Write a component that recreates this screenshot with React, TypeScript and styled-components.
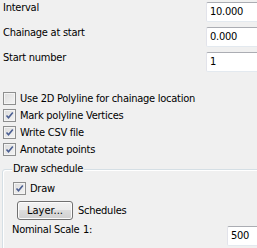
import React from "react"
import styled, { createGlobalStyle } from "styled-components"

const GlobalStyle = createGlobalStyle`
  html, body {
    margin: 0;
    padding: 0;
    background: #f0f0f0;
  }
`

const Panel = styled.div`
  width: 257px;
  height: 248px;
  overflow: hidden;
  background: #f0f0f0;
  font-family: "DejaVu Sans Condensed", "DejaVu Sans", sans-serif;
  font-size: 11px;
  letter-spacing: -0.25px;
  color: #000;
`

const FieldRow = styled.div`
  display: grid;
  grid-template-columns: 203px 60px;
  height: 25px;
  padding-left: 3px;
  align-items: start;
`

const Label = styled.span`
  line-height: 14px;
  padding-top: 1px;
`

const TextBox = styled.div<{ $top?: number }>`
  box-sizing: border-box;
  width: 60px;
  height: 20px;
  margin-top: ${(p) => p.$top ?? 2}px;
  background: #fff;
  border: 1px solid #e3e9ef;
  border-top-color: #abadb3;
  border-left-color: #e2e3ea;
  border-radius: 2px;
  padding: 2px 0 0 3px;
  line-height: 14px;
  white-space: nowrap;
`

const Checks = styled.div`
  display: flex;
  flex-direction: column;
  padding: 15px 0 0 3px;
`

const CheckRow = styled.label`
  display: flex;
  align-items: center;
  gap: 4px;
  height: 17px;
`

const Box = styled.span`
  box-sizing: border-box;
  width: 13px;
  height: 13px;
  flex: none;
  border: 1px solid #8e8f8f;
  background: linear-gradient(135deg, #dcdcdc 0%, #f4f4f4 100%);
  box-shadow: inset 0 0 0 1px #f4f4f4;
  display: flex;
  align-items: center;
  justify-content: center;
`

const Group = styled.fieldset`
  margin: 5px 0 0 2px;
  width: 280px;
  height: 120px;
  padding: 5px 0 0 10px;
  border: 1px solid #d5dfe5;
  border-radius: 3px;
  box-shadow: inset 1px 1px 0 #fff;
`

const Legend = styled.legend`
  padding: 0 1px;
  margin-left: -1px;
  background: #f0f0f0;
  line-height: 12px;
`

const LayerRow = styled.div`
  display: flex;
  align-items: center;
  gap: 5px;
  margin: 4px 0 0 4px;
`

const Button = styled.button`
  box-sizing: border-box;
  width: 56px;
  height: 19px;
  font: inherit;
  color: #000;
  border: 1px solid #707070;
  border-radius: 3px;
  background: linear-gradient(#f2f2f2 0%, #ebebeb 50%, #dddddd 50%, #cfcfcf 100%);
  box-shadow: inset 0 0 0 1px #fcfcfc;
  padding: 0;
`

const ScaleRow = styled.div`
  display: grid;
  grid-template-columns: 71px 144px 60px;
  margin: 1px 0 0 -1px;
  align-items: start;
`

const ScaleLabel = styled.span`
  line-height: 14px;
  padding-top: 2px;
`

const Check = ({ on }: { on: boolean }) => (
  <Box>
    {on && (
      <svg width="9" height="9" viewBox="0 0 9 9">
        <path d="M1.5 4.5 L3.5 6.8 L7.8 1.5" fill="none" stroke="#4b5f92" strokeWidth="1.6" />
      </svg>
    )}
  </Box>
)

const fields = [
  { label: "Interval", value: "10.000" },
  { label: "Chainage at start", value: "0.000" },
  { label: "Start number", value: "1" },
]

const options = [
  { label: "Use 2D Polyline for chainage location", on: false },
  { label: "Mark polyline Vertices", on: true },
  { label: "Write CSV file", on: true },
  { label: "Annotate points", on: true },
]

export default function App() {
  return (
    <Panel>
      <GlobalStyle />
      {fields.map((f) => (
        <FieldRow key={f.label}>
          <Label>{f.label}</Label>
          <TextBox>{f.value}</TextBox>
        </FieldRow>
      ))}
      <Checks>
        {options.map((o) => (
          <CheckRow key={o.label}>
            <Check on={o.on} />
            {o.label}
          </CheckRow>
        ))}
      </Checks>
      <Group>
        <Legend>Draw schedule</Legend>
        <CheckRow>
          <Check on />
          Draw
        </CheckRow>
        <LayerRow>
          <Button>Layer...</Button>
          Schedules
        </LayerRow>
        <ScaleRow>
          <ScaleLabel>Nominal Scale</ScaleLabel>
          <ScaleLabel>1:</ScaleLabel>
          <TextBox $top={5}>500</TextBox>
        </ScaleRow>
      </Group>
    </Panel>
  )
}
